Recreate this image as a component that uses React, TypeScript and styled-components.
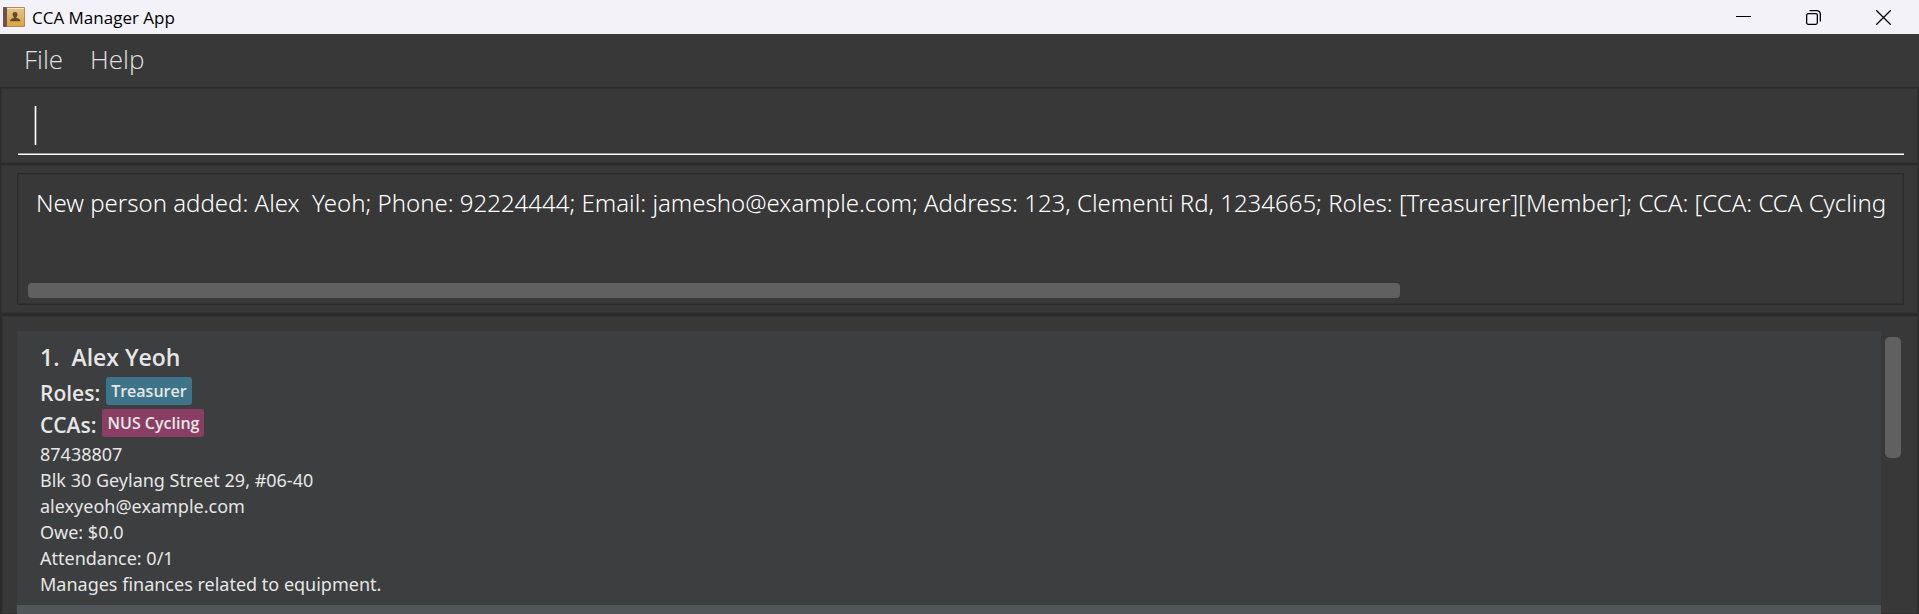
import React from "react";
import styled, { createGlobalStyle } from "styled-components";

const GlobalStyle = createGlobalStyle`
  *, *::before, *::after { box-sizing: border-box; }
  html, body { margin: 0; background: #383838; }
  body { overflow: hidden; }
  body, button, input, textarea {
    font-family: "Open Sans", "Noto Sans", sans-serif;
  }
`;

const Window = styled.div`
  display: flex;
  flex-direction: column;
  height: 100vh;
  overflow: hidden;
  background: #383838;
`;

const TitleBar = styled.header`
  display: flex;
  align-items: center;
  flex: none;
  height: 34px;
  padding: 0 1px 0 3px;
  background: #f3f2f8;
  color: #000;
`;

const AppTitle = styled.h1`
  flex: 1;
  margin: 0 0 0 7px;
  padding-top: 2px;
  font-size: 17px;
  font-weight: 400;
  line-height: 32px;
`;

const WindowButton = styled.button`
  display: flex;
  align-items: center;
  justify-content: center;
  width: 70px;
  height: 34px;
  padding: 0;
  border: 0;
  background: transparent;
  color: #000;
`;

const MenuBar = styled.nav`
  display: flex;
  flex: none;
  gap: 27px;
  height: 53px;
  padding: 0 24px;
`;

const MenuButton = styled.button`
  height: 50px;
  padding: 0;
  border: 0;
  background: transparent;
  color: #e0e0e0;
  font-size: 26px;
  font-weight: 300;
  line-height: 50px;
`;

const Pane = styled.section<{ $grow?: boolean }>`
  display: flex;
  flex: ${(p) => (p.$grow ? "1 1 0" : "none")};
  min-height: 0;
  padding: ${(p) => (p.$grow ? "15px 15px 0 15px" : "8px 14px 8px 16px")};
  border: 1px solid #2b2b2b;
  border-width: ${(p) => (p.$grow ? "2px 1px 0 2px" : "1px 1px 1px 1px")};
  box-shadow: inset 0 0 0 1px #323232;
`;

const CommandLine = styled.div`
  display: flex;
  flex: 1;
  align-items: center;
  height: 59px;
  margin-left: 1px;
  padding: 1px 0 0 16px;
  border-bottom: 1px solid #fff;
  box-shadow: inset 0 -1px 0 #9b9b9b;
`;

const Caret = styled.span`
  width: 3px;
  height: 39px;
  border: solid #787878;
  border-width: 0 1px;
  background: #fff;
`;

const CommandInput = styled.input`
  flex: 1;
  height: 39px;
  padding: 0;
  border: 0;
  outline: 0;
  background: transparent;
  color: #fff;
  caret-color: transparent;
  font-size: 24px;
  font-weight: 300;
`;

const ResultBox = styled.div`
  display: flex;
  flex: 1;
  flex-direction: column;
  min-width: 0;
  height: 132px;
  border: 1px solid #2b2b2b;
  box-shadow: inset 0 0 0 1px #323232;
`;

const ResultText = styled.textarea`
  flex: 1;
  display: block;
  width: 100%;
  padding: 11px 0 0 18px;
  border: 0;
  outline: 0;
  resize: none;
  overflow: hidden;
  background: transparent;
  color: #fff;
  font-family: "Noto Sans", "Open Sans", sans-serif;
  font-size: 24px;
  font-weight: 300;
  line-height: 36px;
  white-space: pre;
`;

const HorizontalThumb = styled.div`
  flex: none;
  width: 72.8%;
  height: 15px;
  margin: 0 0 6px 10px;
  border-radius: 4px;
  background: #606060;
`;

const PersonList = styled.ol`
  display: flex;
  flex: 1;
  flex-direction: column;
  min-width: 0;
  margin: 0;
  padding: 0;
  overflow: hidden;
  list-style: none;
`;

const PersonCard = styled.li<{ $alternate?: boolean }>`
  flex: none;
  min-height: 274px;
  padding: 12px 23px 8px;
  background: ${(p) => (p.$alternate ? "#515658" : "#3c3e3f")};
  color: #e6e6e6;
`;

const PersonName = styled.h2`
  display: flex;
  gap: 12px;
  margin: 0 0 5px;
  font-size: 23px;
  font-weight: 600;
  line-height: 29px;
`;

const TagRow = styled.div`
  display: flex;
  align-items: center;
  gap: 6px;
  height: 28px;
  margin-bottom: 4px;
`;

const TagLabel = styled.span`
  padding-top: 3px;
  font-size: 21px;
  font-weight: 600;
  line-height: 28px;
`;

const Tag = styled.span<{ $color: string }>`
  padding: 0 5px;
  border-radius: 3px;
  background: ${(p) => p.$color};
  font-size: 16px;
  font-weight: 600;
  line-height: 28px;
`;

const Detail = styled.p`
  margin: 0;
  font-family: "Noto Sans", "Open Sans", sans-serif;
  font-size: 18px;
  line-height: 26px;
`;

const VerticalTrack = styled.div`
  flex: none;
  width: 22px;
  padding: 6px 0 0 4px;
`;

const VerticalThumb = styled.div`
  width: 16px;
  height: 121px;
  border-radius: 5px;
  background: #606060;
`;

const AddressBookIcon = () => (
  <svg width="22" height="21" viewBox="0 0 22 21" aria-hidden="true">
    <defs>
      <linearGradient id="cover" x1="0" y1="0" x2="0" y2="1">
        <stop offset="0" stopColor="#e3c08a" />
        <stop offset="1" stopColor="#dca544" />
      </linearGradient>
    </defs>
    <rect x="0" y="0" width="22" height="20" rx="1" fill="#b98a45" />
    <rect x="4" y="2" width="17" height="17" fill="url(#cover)" />
    <rect x="4" y="1" width="17" height="1" fill="#f3e6cf" />
    <rect x="0" y="0" width="4" height="20" rx="1" fill="#6a5450" />
    <path d="M12 5c1.700 0 2.700 1.200 2.500 2.900-.1 1-.6 1.700-1.100 2.100v1c1.500.5 3.800.8 4 3.300H7c.2-2.500 2.500-2.800 3.800-3.300v-1c-.6-.4-1.100-1.100-1.200-2.100C9.400 6.200 10.400 5 12 5z" fill="#5f4a2c" />
  </svg>
);

const MinimizeIcon = () => (
  <svg width="15" height="15" viewBox="0 0 15 15" aria-hidden="true">
    <path d="M0 6.500h15" stroke="currentColor" />
  </svg>
);

const RestoreIcon = () => (
  <svg width="15" height="15" viewBox="0 0 15 15" fill="none" stroke="currentColor" strokeWidth="1.300" aria-hidden="true">
    <rect x="0.650" y="3.650" width="10.700" height="10.700" rx="1.500" />
    <path d="M3.500 0.650H10.500C12.800 0.650 14.350 2.200 14.350 4.500V11.500" />
  </svg>
);

const CloseIcon = () => (
  <svg width="15" height="15" viewBox="0 0 15 15" aria-hidden="true">
    <path d="M0.300 0.300L14.700 14.700M14.700 0.300L0.300 14.700" stroke="currentColor" strokeWidth="1.300" />
  </svg>
);

const result =
  "New person added: Alex  Yeoh; Phone: 92224444; Email: jamesho@example.com; Address: 123, Clementi Rd, 1234665; Roles: [Treasurer][Member]; CCA: [CCA: CCA Cycling";

const person = {
  name: "Alex Yeoh",
  roles: ["Treasurer"],
  ccas: ["NUS Cycling"],
  details: [
    "87438807",
    "Blk 30 Geylang Street 29, #06-40",
    "alexyeoh@example.com",
    "Owe: $0.0",
    "Attendance: 0/1",
    "Manages finances related to equipment.",
  ],
};

export default function App() {
  return (
    <Window>
      <GlobalStyle />
      <TitleBar>
        <AddressBookIcon />
        <AppTitle>CCA Manager App</AppTitle>
        <WindowButton aria-label="Minimize"><MinimizeIcon /></WindowButton>
        <WindowButton aria-label="Restore"><RestoreIcon /></WindowButton>
        <WindowButton aria-label="Close"><CloseIcon /></WindowButton>
      </TitleBar>
      <MenuBar>
        <MenuButton>File</MenuButton>
        <MenuButton>Help</MenuButton>
      </MenuBar>
      <Pane>
        <CommandLine>
          <Caret />
          <CommandInput type="text" aria-label="Command" />
        </CommandLine>
      </Pane>
      <Pane>
        <ResultBox>
          <ResultText readOnly wrap="off" aria-label="Result" value={result} />
          <HorizontalThumb />
        </ResultBox>
      </Pane>
      <Pane $grow>
        <PersonList>
          <PersonCard>
            <PersonName>
              <span>1.</span>
              <span>{person.name}</span>
            </PersonName>
            <TagRow>
              <TagLabel>Roles:</TagLabel>
              {person.roles.map((role) => (
                <Tag key={role} $color="#3e7489">{role}</Tag>
              ))}
            </TagRow>
            <TagRow>
              <TagLabel>CCAs:</TagLabel>
              {person.ccas.map((cca) => (
                <Tag key={cca} $color="#8b3e64">{cca}</Tag>
              ))}
            </TagRow>
            {person.details.map((line) => (
              <Detail key={line}>{line}</Detail>
            ))}
          </PersonCard>
          <PersonCard $alternate />
        </PersonList>
        <VerticalTrack>
          <VerticalThumb />
        </VerticalTrack>
      </Pane>
    </Window>
  );
}
